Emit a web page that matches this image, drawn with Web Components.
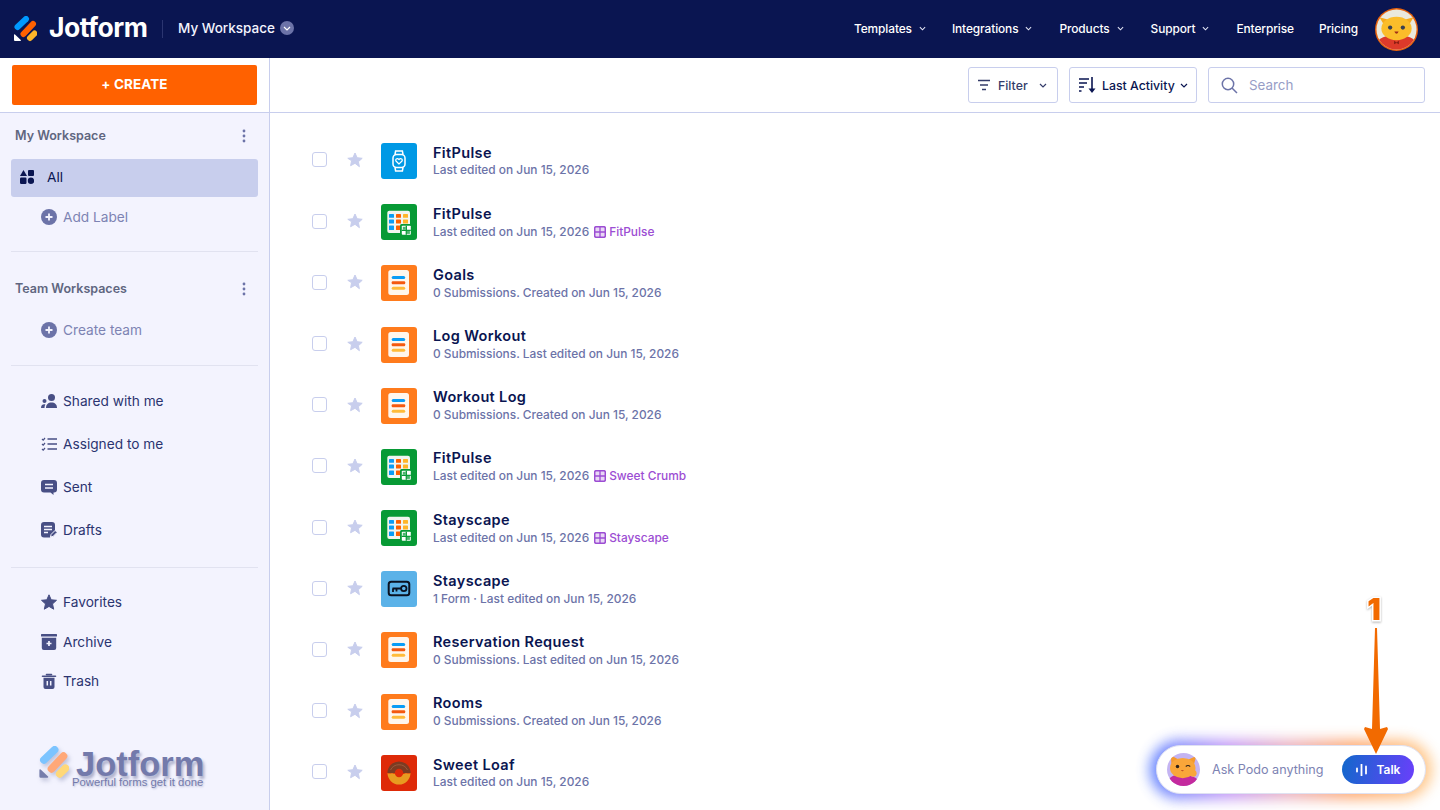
<!DOCTYPE html>
<html lang="en">
<head>
<meta charset="utf-8">
<title>My Workspace</title>
<style>
  html, body { margin: 0; height: 100%; overflow: hidden; background: #fff; }
  body { font-family: Inter, "Noto Sans", sans-serif; color: #0a1551; }
</style>
</head>
<body>
<jf-app></jf-app>

<script>
const LOGO = (blue, orange, yellow, corner) => `
  <path d="M3.5 11 12 3" stroke="${blue}" stroke-width="6" stroke-linecap="round"/>
  <path d="M9.5 18 19 8" stroke="${orange}" stroke-width="6" stroke-linecap="round"/>
  <path d="M16 22l4.5-4.5" stroke="${yellow}" stroke-width="6" stroke-linecap="round"/>
  <path d="M0 18.8V24a1 1 0 0 0 1 1h5.400a.6.6 0 0 0 .4-1L1 18.500a.6.6 0 0 0-1 .3z" fill="${corner}"/>`;

const SIDE_ICONS = {
  plus: `<circle cx="8" cy="8" r="8" fill="#6c73a8"/><path d="M8 4.500v7M4.500 8h7" stroke="#f3f3fe" stroke-width="1.800"/>`,
  shared: `<circle cx="10.500" cy="4.500" r="3.500" fill="#484f85"/><path d="M5 15c0-3.600 2.200-5.500 5.500-5.500S16 11.400 16 15z" fill="#484f85"/><circle cx="3.500" cy="8" r="2" fill="#484f85"/><path d="M0 15c0-2.500 1-3.800 3.400-3.800.6 0 1 .1 1 .1-.6.9-.9 2.200-.9 3.700z" fill="#484f85"/>`,
  assigned: `<path d="M1 3l1.200 1.200L4 2M1 8l1.200 1.200L4 7M1 13l1.200 1.200L4 12" fill="none" stroke="#484f85" stroke-width="1.200"/><path d="M6.500 3H16M6.500 8H16M6.500 13H16" stroke="#484f85" stroke-width="1.500"/>`,
  sent: `<path d="M3 1h10a3 3 0 0 1 3 3v6.500a3 3 0 0 1-3 3h-.500v2.500l-3-2.500H3a3 3 0 0 1-3-3V4a3 3 0 0 1 3-3z" fill="#484f85"/><path d="M4 5.500h8M4 9h8" stroke="#f3f3fe" stroke-width="1.600"/>`,
  drafts: `<path d="M3 0h8a3 3 0 0 1 3 3v6l-5 6.500H3a3 3 0 0 1-3-3V3a3 3 0 0 1 3-3z" fill="#484f85"/><path d="M3 4.500h8M3 7.500h8M3 10.500h4" stroke="#f3f3fe" stroke-width="1.300"/><path d="M9.500 15l.6-2.600 4-4 2 2-4 4z" fill="#484f85" stroke="#f3f3fe"/>`,
  favorites: `<path d="M8 .8l2.200 5 5.300.5-4 3.600 1.200 5.300L8 12.400l-4.700 2.800 1.200-5.300-4-3.600 5.300-.5z" fill="#484f85" stroke="#484f85" stroke-linejoin="round"/>`,
  archive: `<rect x="0" y="0" width="16" height="2.500" rx=".5" fill="#484f85"/><path d="M.8 3.800h14.400V14a2 2 0 0 1-2 2H2.800a2 2 0 0 1-2-2z" fill="#484f85"/><path d="M8 7v5M5.500 9.500h5" stroke="#f3f3fe" stroke-width="1.700"/>`,
  trash: `<path d="M5.500 1.500h5M1.500 3.200h13" stroke="#484f85" stroke-width="1.600" stroke-linecap="round"/><path d="M2.500 4.800h11V14a2 2 0 0 1-2 2h-7a2 2 0 0 1-2-2z" fill="#484f85"/><path d="M6.300 8v4.500M9.700 8v4.500" stroke="#f3f3fe" stroke-width="1.500"/>`,
  all: `<path d="M3.500 0 7 6H0z" fill="#0a1551"/><rect x="8" y="0" width="6" height="6" rx="1" fill="#0a1551"/><rect x="0" y="7.500" width="6.500" height="6.500" rx="1.200" fill="#0a1551"/><circle cx="11" cy="10.800" r="3.200" fill="#0a1551"/>`
};

const TILES = {
  watch: `<rect width="36" height="36" rx="3" fill="#0099e5"/><g fill="none" stroke="#fff" stroke-width="1.500"><rect x="12" y="11.500" width="12" height="13" rx="3.500"/><path d="M14 11.500l.6-3.500h6.800l.6 3.500M14 24.500l.6 3.500h6.800l.6-3.500"/><path d="M18 21l-2.800-2.700c-1.500-1.700.9-3.700 2.800-1.800 1.900-1.900 4.300.1 2.800 1.800z" stroke-width="1.200"/></g>`,
  table: `<rect width="36" height="36" rx="3" fill="#079a35"/><rect x="6.300" y="6.700" width="22.700" height="22.300" rx="2" fill="#f1f5f0"/>
    <g fill="#0a9cf5"><rect x="8" y="10" width="5" height="3.800" rx=".6"/><rect x="8" y="15.500" width="5" height="4" rx=".6"/><rect x="8" y="21.500" width="5" height="4.500" rx=".6"/></g>
    <g fill="#ff6100"><rect x="15" y="10" width="5" height="3.800" rx=".6"/><rect x="15" y="15.500" width="5" height="4" rx=".6"/><rect x="15" y="21.500" width="5" height="4.500" rx=".6"/></g>
    <g fill="#ffb629"><rect x="22" y="10" width="5" height="3.800" rx=".6"/><rect x="22" y="15.500" width="5" height="4" rx=".6"/></g>
    <rect x="19" y="20" width="12.500" height="12.500" rx="1.500" fill="#079a35"/><rect x="20.800" y="21.800" width="9" height="9" rx=".8" fill="#fff"/><path d="M25.300 21.800v9M20.800 26.300h9" stroke="#079a35" stroke-width="1.300"/><rect x="21.800" y="22.800" width="3" height="3" fill="#4cb56e"/><rect x="25.900" y="26.900" width="3" height="3" fill="#4cb56e"/>`,
  form: `<rect width="36" height="36" rx="3" fill="#ff7b1c"/><rect x="7.300" y="5" width="20.700" height="25" rx="2.500" fill="#fff6ec"/><rect x="10.700" y="11" width="13.500" height="3" rx="1.500" fill="#0a9cf5"/><rect x="10.700" y="16.200" width="13.500" height="3" rx="1" fill="#f4590f"/><rect x="10.700" y="21.700" width="13.500" height="3" rx="1.500" fill="#ffbb39"/>`,
  key: `<rect width="36" height="36" rx="3" fill="#5bb2e8"/><rect x="7.700" y="10.700" width="20.600" height="13.600" rx="2.500" fill="none" stroke="#0a1120" stroke-width="2"/><circle cx="22.800" cy="17.500" r="2.700" fill="none" stroke="#0a1120" stroke-width="1.800"/><path d="M20 17.500h-8.500M12 17.500V21M15.500 17.500V20.500" fill="none" stroke="#0a1120" stroke-width="1.800"/>`,
  donut: `<rect width="36" height="36" rx="3" fill="#de2a08"/><path d="M6.500 18a11.500 11.500 0 0 1 23 0z" fill="#7c3b22"/><path d="M6.500 18a11.500 11.500 0 0 0 23 0c-2 1.500-3.500-.5-5.500.5s-3 1-6 .3-4 .5-6-.3-3.500 1-5.500-.5z" fill="#e89b20"/><circle cx="18" cy="18" r="4.200" fill="#de2a08"/><path d="M9.500 15a9.500 9.500 0 0 1 17 0" fill="none" stroke="#9a5a3a" stroke-width="1"/>`
};

const CHEVRON = `<svg width="8" height="5" viewBox="0 0 8 5"><path d="M1 1l3 3 3-3" fill="none" stroke="currentColor" stroke-width="1.200"/></svg>`;

const DOTS = `<svg width="4" height="14" viewBox="0 0 4 14"><circle cx="2" cy="2" r="1.400" fill="#6c73a8"/><circle cx="2" cy="7" r="1.400" fill="#6c73a8"/><circle cx="2" cy="12" r="1.400" fill="#6c73a8"/></svg>`;

class JfHeader extends HTMLElement {
  constructor() {
    super();
    this.attachShadow({ mode: "open" });
    const nav = [["Templates", 1], ["Integrations", 1], ["Products", 1], ["Support", 1], ["Enterprise", 0], ["Pricing", 0]];
    this.shadowRoot.innerHTML = `
      <style>
        :host { display: flex; align-items: center; height: 58px; background: #0a1551; color: #fff; padding: 0 22px 0 14px; box-sizing: border-box; }
        .brand { display: flex; align-items: center; }
        .word { font: 700 26.500px/1 Inter, sans-serif; letter-spacing: -.5px; margin-left: 12px; width: 99px; position: relative; top: -2px; }
        .sep { width: 1px; height: 18px; background: #2b3570; margin: 0 15px 0 14px; }
        .ws { font: 500 13.500px Inter, sans-serif; color: #f3f3fe; display: flex; align-items: center; gap: 5px; position: relative; top: -1px; }
        .ws i { width: 14px; height: 14px; border-radius: 50%; background: #6c73a8; display: grid; place-items: center; color: #fff; }
        nav { margin-left: auto; display: flex; align-items: center; font: 500 11.900px Inter, sans-serif; letter-spacing: -.1px; position: relative; top: -1px; }
        nav span { display: flex; align-items: center; gap: 7px; }
        nav span + span { margin-left: 27px; }
        nav span:nth-child(2) { margin-left: 26px; }
        nav span:last-child { margin-left: 25px; }
        nav svg { width: 7px; color: #e3e5f5; }
        .avatar { margin-left: 17px; width: 43px; height: 43px; display: block; }
      </style>
      <div class="brand">
        <svg width="23" height="26" viewBox="0 0 23 26">${LOGO("#0099ff", "#ff6100", "#ffb629", "#fff")}</svg>
        <div class="word">Jotform</div>
      </div>
      <div class="sep"></div>
      <div class="ws">My Workspace <i>${CHEVRON}</i></div>
      <nav>
        ${nav.map(([t, c]) => `<span>${t}${c ? CHEVRON : ""}</span>`).join("")}
      </nav>
      <svg class="avatar" viewBox="0 0 44 44">
        <defs><clipPath id="c"><circle cx="22" cy="22" r="20.500"/></clipPath></defs>
        <circle cx="22" cy="22" r="22" fill="#e8620c"/>
        <g clip-path="url(#c)">
          <rect width="44" height="44" fill="#eae9dc"/>
          <path d="M0 44c0-11 6-16 22-16s22 5 22 16z" fill="#dc3a2a"/>
          <path d="M9 17 4.500 9.500 14 12zM35 17l4.500-7.500L30 12z" fill="#f6aa1e"/>
          <ellipse cx="22" cy="21" rx="15.500" ry="12" fill="#fbbd2a"/>
          <circle cx="15.500" cy="20" r="2.200" fill="#3b4050"/><circle cx="28.500" cy="20" r="2.200" fill="#3b4050"/>
          <path d="M19.800 24q2.200 4.500 4.400 0z" fill="#a03018"/>
          <path d="M19.500 33.500l2.500 1.700 2.500-1.700v3.500l-2.500-1.300-2.500 1.300z" fill="#8a1e12"/>
        </g>
      </svg>
    `;
  }
}
customElements.define("jf-header", JfHeader);

class JfSideItem extends HTMLElement {
  constructor() {
    super();
    this.attachShadow({ mode: "open" });
  }

  connectedCallback() {
    const icon = this.getAttribute("icon");
    this.shadowRoot.innerHTML = `
      <style>
        :host { display: flex; align-items: center; height: 43px; padding-left: 41px; gap: 6px; font: 400 13.700px Inter, sans-serif; color: #2b3470; }
        :host([muted]) { color: #7d83b3; }
        :host([active]) { height: 36px; padding-bottom: 2px; margin: 0 11px; padding-left: 9px; gap: 13px; background: #c8ceed; border-radius: 3px; color: #0a1551; }
        svg { flex: none; width: 16px; height: 16px; }
        :host([active]) svg { width: 14px; height: 14px; }
      </style>
      <svg viewBox="0 0 ${icon === "all" ? 14 : 16} ${icon === "all" ? 14 : 16}">${SIDE_ICONS[icon]}</svg>
      <slot></slot>
    `;
  }
}
customElements.define("jf-side-item", JfSideItem);

class JfSideHead extends HTMLElement {
  constructor() {
    super();
    this.attachShadow({ mode: "open" });
    this.shadowRoot.innerHTML = `
      <style>
        :host { display: flex; align-items: center; justify-content: space-between; height: 44px; padding: 0 23px 0 15px; font: 600 12.500px Inter, sans-serif; color: #5f6680; }
        svg { display: block; margin-top: 2px; }
      </style>
      <span><slot></slot></span>
      ${DOTS}
    `;
  }
}
customElements.define("jf-side-head", JfSideHead);

class JfSidebar extends HTMLElement {
  constructor() {
    super();
    this.attachShadow({ mode: "open" });
    this.shadowRoot.innerHTML = `
      <style>
        :host { display: flex; flex-direction: column; width: 270px; flex: none; box-sizing: border-box; background: #f3f3fe; border-right: 1px solid #c8ceed; }
        .top { height: 55px; box-sizing: border-box; background: #fff; padding: 7px 12px 0; border-bottom: 1px solid #c8ceed; }
        button { display: block; width: 245px; height: 40px; border: 0; border-radius: 2px; padding: 0 0 2px; background: #ff6100; color: #fff; font: 700 13.500px Inter, sans-serif; letter-spacing: .1px; }
        hr { border: 0; height: 1px; background: #e1e2f0; margin: 0 11px; }
        .mark { margin: auto 0 21px 39px; display: flex; align-items: flex-start; color: #737aab; }
        .mark svg { width: 30px; height: 33px; flex: none; filter: drop-shadow(2px 3px 2px rgba(40,50,110,.25)); }
        .copy { margin: 5px 0 0 3px; }
        .word { font: 700 34.500px/26px "Liberation Sans", Arial, sans-serif; margin-left: 4px; text-shadow: 2px 3px 3px rgba(40,50,110,.35); }
        .tag { font: 400 11.300px/14px "Liberation Sans", Arial, sans-serif; margin-top: -2px; white-space: nowrap; text-shadow: 1px 1px 2px rgba(40,50,110,.3); }
      </style>
      <div class="top"><button>+ CREATE</button></div>
      <jf-side-head style="margin-bottom:2px">My Workspace</jf-side-head>
      <jf-side-item icon="all" active>All</jf-side-item>
      <jf-side-item icon="plus" muted style="height:40px">Add Label</jf-side-item>
      <hr style="margin-top:14px">
      <jf-side-head style="margin-top:14px">Team Workspaces</jf-side-head>
      <jf-side-item icon="plus" muted style="height:40px">Create team</jf-side-item>
      <hr style="margin-top:15px;margin-bottom:13px">
      <jf-side-item icon="shared">Shared with me</jf-side-item>
      <jf-side-item icon="assigned">Assigned to me</jf-side-item>
      <jf-side-item icon="sent">Sent</jf-side-item>
      <jf-side-item icon="drafts">Drafts</jf-side-item>
      <hr style="margin-top:16px;margin-bottom:14px">
      <jf-side-item icon="favorites" style="height:40px">Favorites</jf-side-item>
      <jf-side-item icon="archive" style="height:39px">Archive</jf-side-item>
      <jf-side-item icon="trash" style="height:39px">Trash</jf-side-item>
      <div class="mark">
        <svg viewBox="0 0 23 26">${LOGO("#7cc4ff", "#ffa878", "#ffd878", "#767dab")}</svg>
        <div class="copy">
          <div class="word">Jotform</div>
          <div class="tag">Powerful forms get it done</div>
        </div>
      </div>
    `;
  }
}
customElements.define("jf-sidebar", JfSidebar);

class JfToolbar extends HTMLElement {
  constructor() {
    super();
    this.attachShadow({ mode: "open" });
    this.shadowRoot.innerHTML = `
      <style>
        :host { display: flex; justify-content: flex-end; gap: 11px; height: 55px; box-sizing: border-box; padding: 9px 15px 0 0; border-bottom: 1px solid #c8ceed; background: #fff; flex: none; }
        .box { height: 36px; box-sizing: border-box; border: 1px solid #c8ceed; border-radius: 3px; display: flex; align-items: center; font: 500 12.300px Inter, sans-serif; color: #343c6a; }
        .filter { width: 90px; padding-left: 8px; gap: 7px; }
        .sort { width: 128px; padding-left: 9px; gap: 5px; color: #0a1551; }
        .search { width: 217px; padding-left: 12px; gap: 11px; color: #979dc6; font-weight: 400; font-size: 13.400px; }
        .chev { margin-left: auto; margin-right: 10px; display: flex; }
        .sort .chev { margin-right: 8px; }
      </style>
      <div class="box filter">
        <svg width="14" height="12" viewBox="0 0 14 12"><path d="M1 1.500h12M3 6h8M5 10.500h4" stroke="#343c6a" stroke-width="1.300"/></svg>
        Filter <span class="chev">${CHEVRON}</span>
      </div>
      <div class="box sort">
        <svg width="18" height="18" viewBox="0 0 18 18"><path d="M0 3h10M0 7h8M0 11h5M0 15h2.500" stroke="#0a1551" stroke-width="1.600"/><path d="M13 1v13" stroke="#0a1551" stroke-width="1.600"/><path d="M9.500 12.500h7L13 17z" fill="#0a1551"/></svg>
        Last Activity <span class="chev">${CHEVRON}</span>
      </div>
      <div class="box search">
        <svg width="17" height="17" viewBox="0 0 17 17"><circle cx="7" cy="7" r="5.700" fill="none" stroke="#6c73a8" stroke-width="1.500"/><path d="M11 11l5 5" stroke="#6c73a8" stroke-width="1.500"/></svg>
        Search
      </div>
    `;
  }
}
customElements.define("jf-toolbar", JfToolbar);

class JfRow extends HTMLElement {
  constructor() {
    super();
    this.attachShadow({ mode: "open" });
  }

  connectedCallback() {
    const link = this.getAttribute("link");
    this.shadowRoot.innerHTML = `
      <style>
        :host { display: flex; align-items: center; height: 61.200px; padding-left: 42px; }
        .check { width: 15px; height: 15px; box-sizing: border-box; border: 1px solid #c8ceed; border-radius: 3px; background: #fff; margin-top: -2px; }
        .star { width: 16px; height: 16px; margin: -2px 0 0 20px; }
        .tile { width: 36px; height: 36px; margin-left: 18px; flex: none; }
        .text { margin: 1px 0 0 16px; }
        .name { font: 600 14.500px/18px Inter, sans-serif; color: #0a1551; letter-spacing: .35px; }
        .sub { font: 500 11.900px/18px Inter, sans-serif; color: #6c73a8; display: flex; align-items: center; white-space: pre; }
        :host([tight]) .sub { margin-top: -1px; }
        .link { color: #9c4dd3; display: inline-flex; align-items: center; gap: 3px; margin-left: 5px; }
      </style>
      <div class="check"></div>
      <svg class="star" viewBox="0 0 16 16"><path d="M8 1l2.100 4.700 5.100.6-3.800 3.400 1 5L8 11.300l-4.400 2.400 1-5L.8 6.300l5.100-.6z" fill="#c8ceed" stroke="#c8ceed" stroke-linejoin="round"/></svg>
      <svg class="tile" viewBox="0 0 36 36">${TILES[this.getAttribute("icon")]}</svg>
      <div class="text">
        <div class="name">${this.getAttribute("name")}</div>
        <div class="sub">${this.getAttribute("sub")}${link ? `<span class="link"><svg width="12" height="12" viewBox="0 0 12 12"><rect x=".7" y=".7" width="10.600" height="10.600" rx="1.500" fill="#e9d8f5" stroke="#9c4dd3" stroke-width="1.500"/><path d="M6 1v10M1 6h10" stroke="#9c4dd3" stroke-width="1.300"/></svg>${link}</span>` : ""}</div>
      </div>
    `;
  }
}
customElements.define("jf-row", JfRow);

class PodoBar extends HTMLElement {
  constructor() {
    super();
    this.attachShadow({ mode: "open" });
    this.shadowRoot.innerHTML = `
      <style>
        :host { position: absolute; left: 1156px; top: 745px; width: 270px; height: 49px; display: block; }
        .glow { position: absolute; inset: -5px -6px; border-radius: 30px; background: linear-gradient(90deg, #3f6bff 0%, #b985f5 28%, #e7a0b0 50%, #ff9a55 72%, #ffc27a 100%); filter: blur(7px); opacity: .85; }
        .pill { position: relative; height: 100%; box-sizing: border-box; background: #fff; border: 1px solid #dfe1f2; border-radius: 25px; display: flex; align-items: center; padding-left: 10px; }
        .ava { width: 33px; height: 33px; flex: none; }
        .ask { margin: -1px 0 0 12px; font: 400 12.600px Inter, sans-serif; color: #7d83b3; }
        .talk { margin-left: auto; margin-right: 11px; width: 72px; height: 29px; border-radius: 15px; background: linear-gradient(100deg, #1268cb, #6a3ffb); color: #fff; display: flex; align-items: center; justify-content: center; gap: 10px; font: 600 12px Inter, sans-serif; }
      </style>
      <div class="glow"></div>
      <div class="pill">
        <svg class="ava" viewBox="0 0 44 44">
          <defs><clipPath id="p"><circle cx="22" cy="22" r="22"/></clipPath></defs>
          <g clip-path="url(#p)">
            <rect width="44" height="44" fill="#c4b4f2"/>
            <path d="M0 44c0-9 6-15 16-15s28 1 28 15z" fill="#c42a9e"/>
            <path d="M6 16 5 3l11 6zM36 15l3-11-11 5z" fill="#f59a2c"/>
            <ellipse cx="21" cy="20" rx="17" ry="13.500" fill="#f9a63a"/>
            <circle cx="14" cy="18" r="2.300" fill="#2e2018"/>
            <path d="M25 18q3-2.500 6 0" fill="none" stroke="#2e2018" stroke-width="1.400"/>
            <path d="M18.500 23q2 2.500 4 0z" fill="#b03a20"/>
            <circle cx="35" cy="27" r="4.500" fill="#f9a63a"/>
          </g>
        </svg>
        <span class="ask">Ask Podo anything</span>
        <div class="talk">
          <svg width="11" height="12" viewBox="0 0 11 12"><path d="M1 4.500v3M5.500 .5v11M10 2.500v7" stroke="#fff" stroke-width="1.800" stroke-linecap="round"/></svg>
          <span>Talk</span>
        </div>
      </div>
    `;
  }
}
customElements.define("podo-bar", PodoBar);

class JfCallout extends HTMLElement {
  constructor() {
    super();
    this.attachShadow({ mode: "open" });
    this.shadowRoot.innerHTML = `
      <style>
        :host { position: absolute; left: 1360px; top: 594px; width: 32px; height: 162px; display: block; }
        .num { position: absolute; left: 0; top: 0; width: 28px; text-align: center; font: 900 30px/30px Inter, sans-serif; color: #f26a00; -webkit-text-stroke: 3px #fff; paint-order: stroke fill; filter: drop-shadow(0 1px 1px rgba(0,0,0,.3)); }
        svg { position: absolute; left: 0; top: 34px; }
      </style>
      <div class="num">1</div>
      <svg width="32" height="128" viewBox="0 0 32 128">
        <path d="M15 0h2l3 101 7-2 1 2-12 25L4 101l1-2 7 2z" fill="#f26a00"/>
      </svg>
    `;
  }
}
customElements.define("jf-callout", JfCallout);

class JfApp extends HTMLElement {
  constructor() {
    super();
    this.attachShadow({ mode: "open" });
    const rows = [
      ["FitPulse", "watch", "Last edited on Jun 15, 2026", "", 1],
      ["FitPulse", "table", "Last edited on Jun 15, 2026", "FitPulse"],
      ["Goals", "form", "0 Submissions. Created on Jun 15, 2026"],
      ["Log Workout", "form", "0 Submissions. Last edited on Jun 15, 2026"],
      ["Workout Log", "form", "0 Submissions. Created on Jun 15, 2026"],
      ["FitPulse", "table", "Last edited on Jun 15, 2026", "Sweet Crumb"],
      ["Stayscape", "table", "Last edited on Jun 15, 2026", "Stayscape"],
      ["Stayscape", "key", "1 Form · Last edited on Jun 15, 2026"],
      ["Reservation Request", "form", "0 Submissions. Last edited on Jun 15, 2026"],
      ["Rooms", "form", "0 Submissions. Created on Jun 15, 2026"],
      ["Sweet Loaf", "donut", "Last edited on Jun 15, 2026", "", 1]
    ];
    this.shadowRoot.innerHTML = `
      <style>
        :host { display: flex; flex-direction: column; width: 1440px; height: 810px; position: relative; overflow: hidden; }
        .body { display: flex; flex: 1; min-height: 0; }
        main { flex: 1; display: flex; flex-direction: column; min-width: 0; }
        .list { flex: 1; padding-top: 17.400px; overflow: hidden; background: #fff; }
      </style>
      <jf-header></jf-header>
      <div class="body">
        <jf-sidebar></jf-sidebar>
        <main>
          <jf-toolbar></jf-toolbar>
          <div class="list">
            ${rows.map(([name, icon, sub, link, tight]) => `<jf-row name="${name}" icon="${icon}" sub="${sub}"${link ? ` link="${link}"` : ""}${tight ? " tight" : ""}></jf-row>`).join("")}
          </div>
        </main>
      </div>
      <podo-bar></podo-bar>
      <jf-callout></jf-callout>
    `;
  }
}
customElements.define("jf-app", JfApp);
</script>
</body>
</html>
